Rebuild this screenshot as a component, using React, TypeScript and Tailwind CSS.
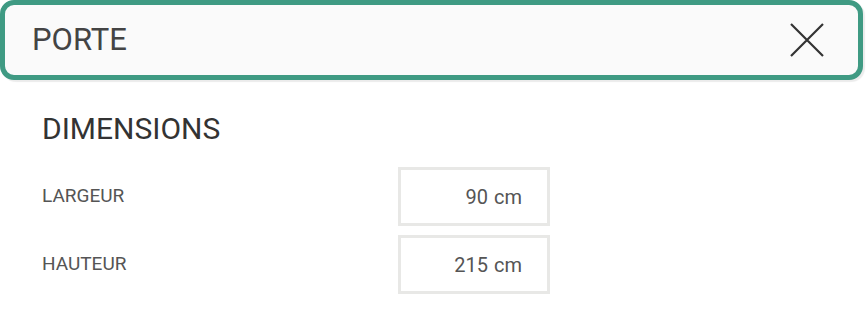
export default function App() {
  const rows = [
    { label: 'LARGEUR', value: '90' },
    { label: 'HAUTEUR', value: '215' },
  ];

  return (
    <div className="w-[866px] h-[312px] bg-white font-['Roboto',sans-serif]">
      <div className="w-[863px] h-[80px] rounded-[14px] border-[5px] border-[#3f9a83] bg-[#fafafa] shadow-[2px_2px_1px_rgba(0,0,0,0.08)] flex items-center justify-between pl-[27px] pr-[33px]">
        <span className="text-[31px] text-[#444]">PORTE</span>
        <svg width="36" height="36" viewBox="0 0 36 36" className="text-[#333]">
          <path d="M2 2 L34 34 M34 2 L2 34" stroke="currentColor" strokeWidth="2.2" fill="none" />
        </svg>
      </div>

      <div className="pl-[42px] pt-[31px]">
        <h2 className="text-[30px] leading-[36px] text-[#333]">DIMENSIONS</h2>
        <div className="mt-[20px] flex flex-col gap-[9px]">
          {rows.map((row) => (
            <div key={row.label} className="flex items-center">
              <span className="w-[356px] text-[19px] text-[#555]">{row.label}</span>
              <div className="w-[152px] h-[59px] border-[3px] border-[#e8e8e6] flex items-center justify-end pr-[25px] text-[20px] text-[#555]">
                {row.value}
                <span className="ml-[6px]">cm</span>
              </div>
            </div>
          ))}
        </div>
      </div>
    </div>
  );
}
